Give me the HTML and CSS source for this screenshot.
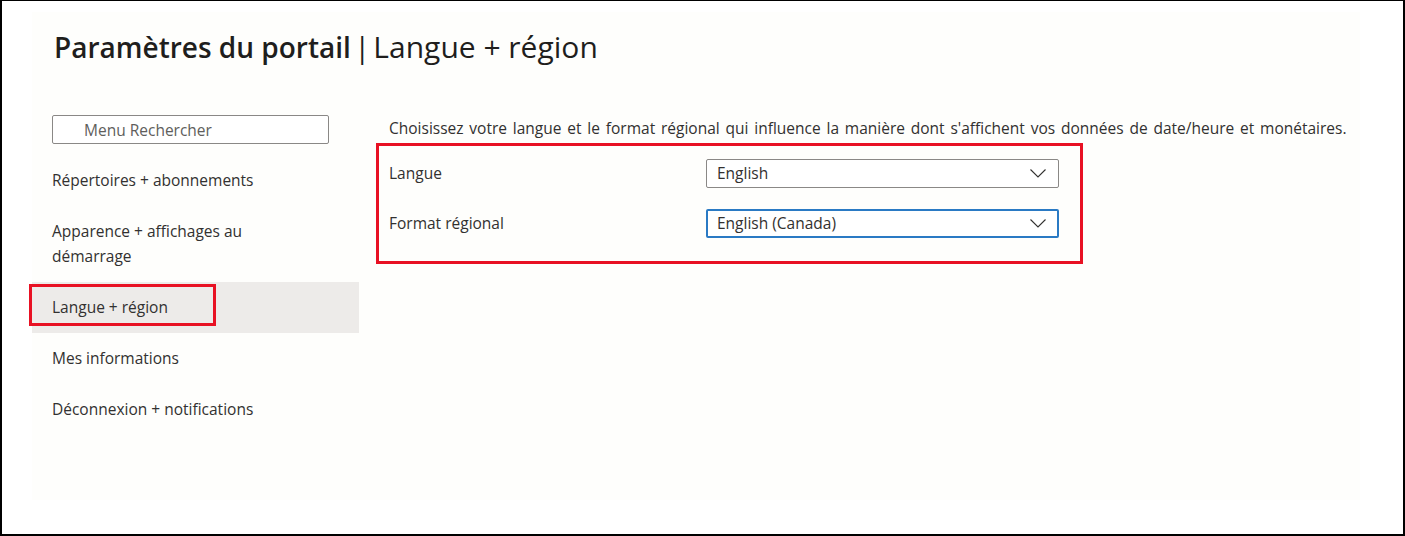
FILE: index.html
```html
<!DOCTYPE html>
<html lang="fr">
<head>
<meta charset="utf-8">
<title>Paramètres du portail</title>
<link rel="stylesheet" href="styles.css">
</head>
<body>
<div class="frame">
  <div class="panel">
    <h1 class="title"><span class="title-main">Paramètres du portail</span> <span class="title-sep">|</span> <span class="title-sub">Langue + région</span></h1>
    <div class="layout">
      <nav class="nav">
        <div class="search"><span class="search-text">Menu Rechercher</span></div>
        <ul class="menu">
          <li class="menu-item">Répertoires + abonnements</li>
          <li class="menu-item">Apparence + affichages au démarrage</li>
          <li class="menu-item selected">Langue + région<span class="mark mark-nav"></span></li>
          <li class="menu-item">Mes informations</li>
          <li class="menu-item">Déconnexion + notifications</li>
        </ul>
      </nav>
      <main class="main">
        <p class="desc">Choisissez votre langue et le format régional qui influence la manière dont s'affichent vos données de date/heure et monétaires.</p>
        <div class="form">
          <div class="row">
            <span class="label">Langue</span>
            <div class="select"><span class="select-text">English</span>
              <svg class="chev" width="16" height="9" viewBox="0 0 16 9"><polyline points="0.5,0.5 8,8 15.5,0.5" fill="none" stroke="#323130" stroke-width="1.1"/></svg>
            </div>
          </div>
          <div class="row">
            <span class="label">Format régional</span>
            <div class="select focused"><span class="select-text">English (Canada)</span>
              <svg class="chev" width="16" height="9" viewBox="0 0 16 9"><polyline points="0.5,0.5 8,8 15.5,0.5" fill="none" stroke="#323130" stroke-width="1.1"/></svg>
            </div>
          </div>
          <span class="mark mark-form"></span>
        </div>
      </main>
    </div>
  </div>
</div>
</body>
</html>
```
FILE: styles.css
```css
* { box-sizing: border-box; }
html, body { margin: 0; padding: 0; background: #ffffff; }
body {
  font-family: "Open Sans", "Noto Sans", "Liberation Sans", sans-serif;
  color: #323130;
}
.frame {
  width: 1405px;
  height: 536px;
  border-top: 1px solid #000;
  border-left: 2px solid #000;
  border-right: 2px solid #000;
  border-bottom: 2px solid #000;
  background: #ffffff;
  padding: 11px 0 0 30px;
}
.panel {
  width: 1328px;
  height: 488px;
  background: #fefefc;
  padding-top: 15px;
}
.title {
  margin: 0;
  padding-left: 22px;
  font-size: 28px;
  line-height: 40px;
  font-weight: 400;
  color: #1f1e1d;
  white-space: nowrap;
  word-spacing: -4px;
}
.title-main { font-weight: 600; word-spacing: 0; }
.title-sep { font-size: 29px; color: #1f1e1d; }
.title-sub { font-size: 30px; word-spacing: 0; }
.layout {
  display: flex;
  margin-top: 48px;
}
.nav {
  width: 327px;
  flex: none;
}
.search {
  margin-left: 20px;
  width: 277px;
  height: 29px;
  border: 1px solid #8a8886;
  border-radius: 2px;
  background: #fff;
  padding-left: 31px;
  display: flex;
  align-items: center;
}
.search-text {
  font-size: 15.5px;
  color: #605e5c;
}
.menu {
  list-style: none;
  margin: 11px 0 0;
  padding: 0;
}
.menu-item {
  position: relative;
  padding: 13px 60px 13px 20px;
  font-size: 15.5px;
  line-height: 25px;
  color: #323130;
}
.menu-item.selected { background: #edebe9; }
.mark {
  position: absolute;
  border: 3px solid #e81123;
  pointer-events: none;
}
.mark-nav {
  left: -3px;
  top: 2px;
  width: 187px;
  height: 42px;
}
.main {
  flex: 1;
  padding-left: 30px;
}
.desc {
  margin: 3px 0 0;
  font-size: 15.5px;
  line-height: 20px;
  word-spacing: 1.8px;
  color: #323130;
  white-space: nowrap;
}
.form {
  position: relative;
  margin-top: 10px;
  width: 670px;
}
.row {
  display: flex;
  align-items: center;
  height: 50px;
}
.label {
  width: 317px;
  flex: none;
  font-size: 15.5px;
  color: #323130;
}
.select {
  width: 353px;
  height: 29px;
  border: 1px solid #8a8886;
  border-radius: 2px;
  background: #fff;
  display: flex;
  align-items: center;
  justify-content: space-between;
  padding: 0 12px 0 10px;
}
.select.focused {
  border: 2px solid #2a7ac4;
  padding-left: 9px;
  padding-right: 11px;
}
.select-text {
  font-size: 15.5px;
  color: #323130;
}
.mark-form {
  left: -13px;
  top: -5px;
  width: 707px;
  height: 121px;
}
```
